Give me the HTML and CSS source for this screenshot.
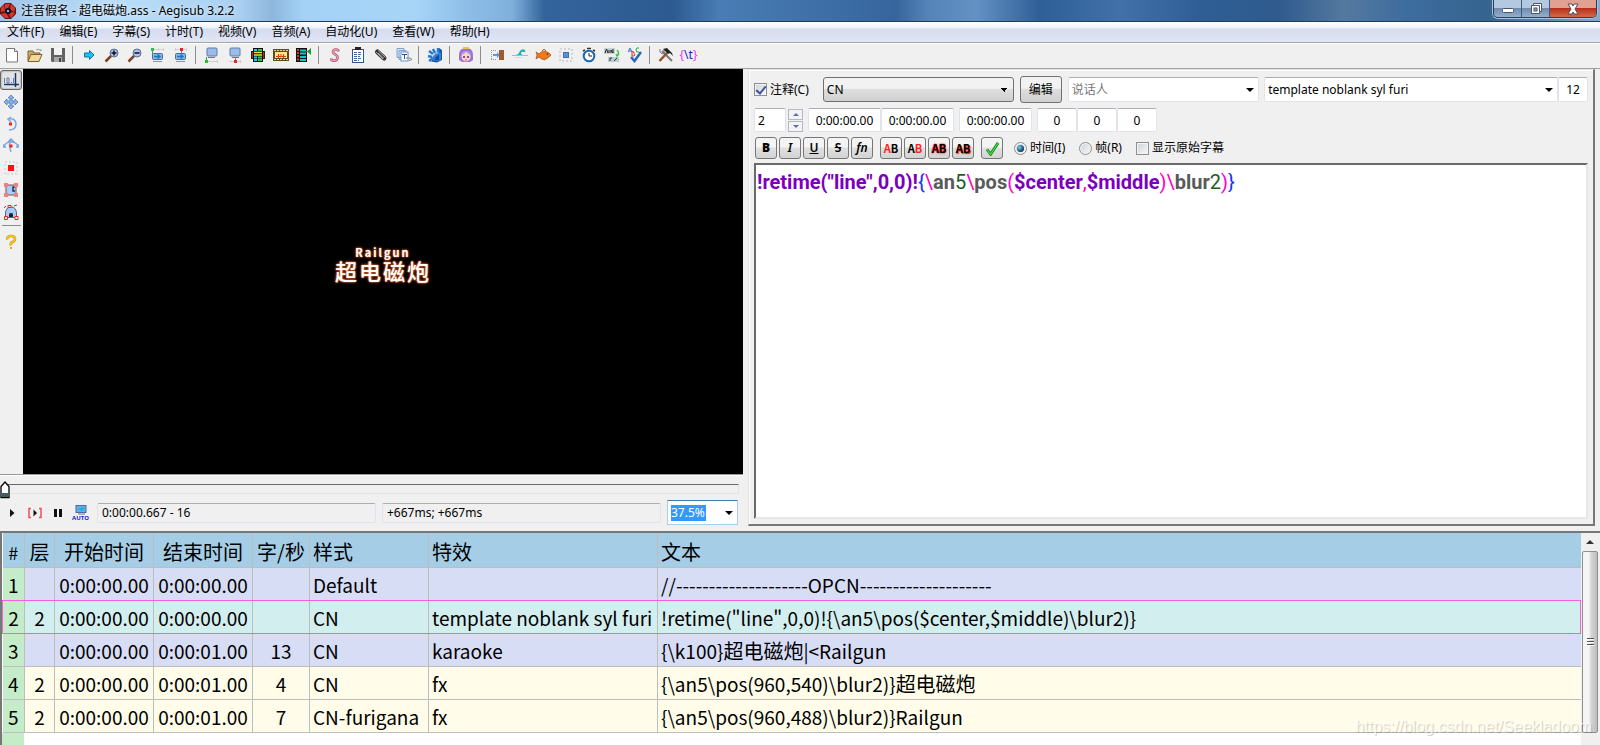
FILE: index.html
```html
<!DOCTYPE html>
<html lang="zh-CN">
<head>
<meta charset="utf-8">
<title>注音假名 - 超电磁炮.ass - Aegisub 3.2.2</title>
<link rel="stylesheet" href="styles.css">
</head>
<body>
<div class="app">
  <header class="titlebar">
    <svg class="logo" viewBox="0 0 16 16"><path d="M5 0h6l5 5v6l-5 5H5l-5-5V5z" fill="#6b1513"/><path d="M5 1h5L8 5 5 6zM11 1l4 4-1 4-4-3zM15 10l-4 5-2-4 3-2zM9 15H5l-4-4 5-1zM1 9V5l3-3 1 6z" fill="#d33a2c"/><circle cx="8" cy="8" r="3" fill="#0d1833"/><circle cx="8" cy="8" r="1" fill="#cfe0ff"/></svg>
    <h1 class="title">注音假名 - 超电磁炮.ass - Aegisub 3.2.2</h1>
    <div class="winbtns">
      <button class="winbtn" aria-label="最小化"><svg width="14" height="14" viewBox="0 0 14 14"><rect x="1.500" y="6.500" width="11" height="4" rx="1" fill="#fff" stroke="#4a5568"/></svg></button>
      <button class="winbtn" aria-label="还原"><svg width="14" height="14" viewBox="0 0 14 14"><path d="M4.500 1.500h8v8h-2v2h-8v-8h2z" fill="#fff" stroke="#4a5568"/><path d="M4.500 3.500h6v6" fill="none" stroke="#4a5568"/><rect x="5" y="6" width="3" height="3" fill="#8fa6c2" stroke="#4a5568"/></svg></button>
      <button class="winbtn winbtn-close" aria-label="关闭"><svg width="14" height="14" viewBox="0 0 14 14"><path d="M2 2h4l1 2 1-2h4L9 7l3 5H8L7 10l-1 2H2l3-5z" fill="#fff" stroke="#5a4a55"/></svg></button>
    </div>
  </header>
  <nav class="menubar">
    <button>文件(F)</button><button>编辑(E)</button><button>字幕(S)</button><button>计时(T)</button><button>视频(V)</button><button>音频(A)</button><button>自动化(U)</button><button>查看(W)</button><button>帮助(H)</button>
  </nav>
  <div class="toolbar" role="toolbar">
    <button aria-label="新建"><svg viewBox="0 0 16 16"><path d="M2.500 1.500h8l3 3v10.500h-11z" fill="#fff" stroke="#777"/><path d="M10.500 1.500v3h3" fill="#eee" stroke="#777"/></svg></button>
    <button aria-label="打开"><svg viewBox="0 0 16 16"><path d="M1 14V4h5l1 2h6v3" fill="#cda75c" stroke="#7a6236"/><path d="M1 14.500l3-7h11l-3 7z" fill="#f1d79a" stroke="#7a6236"/><path d="M9 3q3-2 5 1v-2" fill="none" stroke="#999"/></svg></button>
    <button aria-label="保存"><svg viewBox="0 0 16 16"><path d="M1 1h14v14H2l-1-1z" fill="#636363"/><rect x="4" y="1" width="8" height="7" fill="#f4f4f4"/><rect x="4" y="10" width="8" height="5" fill="#a8a8a8"/><rect x="9" y="11" width="2" height="4" fill="#444"/></svg></button>
    <span class="sep"></span>
    <button aria-label="跳转"><svg viewBox="0 0 16 16"><path d="M3.500 6h5V3.500L13 8l-4.500 4.500V10h-5z" fill="#12c6f5" stroke="#1671a5"/></svg></button>
    <button aria-label="放大"><svg viewBox="0 0 16 16"><path d="M1.500 14.500l6-6" stroke="#7a4526" stroke-width="2.500"/><circle cx="10" cy="6" r="4" fill="#a9c1ee" stroke="#5b6d93"/><path d="M7.500 6h5M10 3.500v5" stroke="#111" stroke-width="1.500"/></svg></button>
    <button aria-label="缩小"><svg viewBox="0 0 16 16"><path d="M1.500 14.500l6-6" stroke="#7a4526" stroke-width="2.500"/><circle cx="10" cy="6" r="4" fill="#a9c1ee" stroke="#5b6d93"/><path d="M7.500 6h5" stroke="#111" stroke-width="1.500"/></svg></button>
    <button aria-label="跳到起点"><svg viewBox="0 0 16 16"><path d="M4 2.500h10M13.500 1v3M8.500 1v3" stroke="#d2d2d2"/><rect x="1" y="1" width="3" height="3" fill="#27c63a"/><path d="M2.500 4v4" stroke="#6b84a8"/><rect x="2.500" y="6.500" width="10" height="6" rx="1" fill="#8db4e4" stroke="#4a6d9b"/><path d="M4 9.500h5M7.500 7.500l2.500 2-2.500 2" stroke="#0b7fc0" fill="none" stroke-width="1.500"/><path d="M3 14.500h9" stroke="#8b98a8"/></svg></button>
    <button aria-label="跳到终点"><svg viewBox="0 0 16 16"><path d="M2 2.500h12M2.500 1v3M13.500 1v3" stroke="#d2d2d2"/><rect x="7" y="1" width="3" height="3" fill="#e22"/><path d="M8.500 4v3" stroke="#6b84a8"/><rect x="2.500" y="6.500" width="10" height="6" rx="1" fill="#8db4e4" stroke="#4a6d9b"/><path d="M4 9.500h5M7.500 7.500l2.500 2-2.500 2" stroke="#0b7fc0" fill="none" stroke-width="1.500"/><path d="M3 14.500h9" stroke="#8b98a8"/></svg></button>
    <span class="sep"></span>
    <button aria-label="起点设为视频"><svg viewBox="0 0 16 16"><rect x="3" y="1" width="10" height="8" rx="1" fill="#9dbbe8" stroke="#5a7eb0"/><path d="M4 10.500h7M2.500 10v3" stroke="#777"/><path d="M4 14.500h10M13.500 13v3" stroke="#ccc"/><rect x="1" y="13" width="3" height="3" fill="#1fc62b"/></svg></button>
    <button aria-label="终点设为视频"><svg viewBox="0 0 16 16"><rect x="3" y="1" width="10" height="8" rx="1" fill="#9dbbe8" stroke="#5a7eb0"/><path d="M5 10.500h7M8.500 10v3" stroke="#777"/><path d="M2 14.500h12M13.500 13v3" stroke="#ccc"/><rect x="7" y="13" width="3" height="3" fill="#e22"/></svg></button>
    <button aria-label="选择可见行"><svg viewBox="0 0 16 16"><rect x="1.500" y="4.500" width="13" height="7" fill="#b22" stroke="#222"/><rect x="3" y="1" width="10" height="14" fill="#111"/><path d="M4 3h3M4 13h3M4 10.500h3" stroke="#15cde8" stroke-width="2"/><path d="M8 3h4M8 13h4M8 10.500h4" stroke="#22ca4c" stroke-width="2"/><path d="M4 5.500h8M4 8h8" stroke="#f2df3c" stroke-width="1.500"/></svg></button>
    <button aria-label="对齐场景"><svg viewBox="0 0 16 16"><rect x="0" y="2" width="16" height="12" fill="#5e4b1d"/><path d="M1 3.500h14M1 12.500h14" stroke="#eadb8a" stroke-dasharray="2 1"/><rect x="2" y="5" width="12" height="6" fill="#ffe680"/><path d="M3 9.500h10M5.500 7v4M8 7v3M10.500 7v4" stroke="#e23c16"/></svg></button>
    <button aria-label="平移"><svg viewBox="0 0 16 16"><rect x="0" y="1" width="11" height="14" fill="#111"/><path d="M1 3h2M1 6h2M1 9h2M1 12.500h2" stroke="#d33" stroke-width="2"/><path d="M4 3.500h6M4 6.500h6M4 10h6M4 13h6" stroke="#12c9c9" stroke-width="2"/><path d="M10 4.500h3" stroke="#f33"/><path d="M15 1v7l-4-3.500z" fill="#1c9c35"/></svg></button>
    <span class="sep"></span>
    <button aria-label="样式管理器"><svg viewBox="0 0 16 16"><path d="M11.500 4.500C11 1.500 6 2 6 5c0 3 5 2 4.500 6C10 14.500 4.500 14.500 4 11.500" fill="none" stroke="#b0506c" stroke-width="2.600"/><path d="M11.500 4.500C11 1.500 6 2 6 5c0 3 5 2 4.500 6C10 14.500 4.500 14.500 4 11.500" fill="none" stroke="#f59ab2" stroke-width="1.300"/></svg></button>
    <button aria-label="属性"><svg viewBox="0 0 16 16"><rect x="2.500" y="2.500" width="11" height="13" fill="#fff" stroke="#355486"/><rect x="5" y="0" width="6" height="3" fill="#222"/><path d="M4 5.500h7M4 7.500h8M4 9.500h6M4 11.500h8M4 13.500h5" stroke="#3d68a8" stroke-dasharray="3 1"/></svg></button>
    <button aria-label="附件"><svg viewBox="0 0 16 16"><path d="M4.500 5l6.500 6" stroke="#333" stroke-width="5" stroke-linecap="round"/><path d="M3 5l7 7M5 3.500l7.500 7M5 6l6 5.500" stroke="#aaa" stroke-width="1"/></svg></button>
    <button aria-label="字体收集"><svg viewBox="0 0 16 16"><path d="M1 1.500h7v9H1zM3 3.500h7v9H3z" fill="#d8e6f8" stroke="#7fa2cf"/><rect x="5" y="5" width="7" height="9" fill="#fff" stroke="#6b93c8"/><path d="M6 7.500h5M8.500 7v5" stroke="#274d92"/><path d="M10 11h4l2 1.500-3 1" stroke="#888" fill="none"/></svg></button>
    <span class="sep"></span>
    <button aria-label="自动化"><svg viewBox="0 0 16 16"><path d="M12 1l3 2v10l-5 2.500-6-1 3-4z" fill="#1c56a6"/><path d="M2 4l4 3M6 2l2 4M11 1v4M1 9l4 1M2 14l4-3" stroke="#2878d0" stroke-width="2.500"/><path d="M5 13q0-7 7-8l2 1v7l-3 1" fill="#2e7fd6"/><path d="M8 13q0-4 4-5v5z" fill="#174a91"/><path d="M5.500 10q2-4 6-4.500" stroke="#8cc6f4" fill="none"/></svg></button>
    <span class="sep"></span>
    <button aria-label="ASSDraw"><svg viewBox="0 0 16 16"><path d="M1 8q0-7 7-7t7 7v5l-3 2H4l-3-2z" fill="#9d74d6"/><ellipse cx="8" cy="9.500" rx="4.500" ry="5" fill="#fbd5cb"/><path d="M3 8q1-4 5-4t5 4q-3-1-5-3-2 3-5 3z" fill="#b99be4"/><path d="M6 9v2M10 9v2" stroke="#542c82" stroke-width="1.500"/><path d="M5 1h6" stroke="#f0c33f" stroke-width="2"/><path d="M7 13h2" stroke="#d55"/></svg></button>
    <span class="sep"></span>
    <button aria-label="平移时间"><svg viewBox="0 0 16 16"><path d="M2.500 3v10M2 3.500h6M2 12.500h6" stroke="#999" stroke-dasharray="1 1"/><path d="M4 8h5" stroke="#5b9ae0" stroke-width="2"/><path d="M8 5l3 3-3 3z" fill="#5b9ae0"/><rect x="10" y="3" width="5" height="10" fill="#9b5a32"/></svg></button>
    <button aria-label="样式助手"><svg viewBox="0 0 16 16"><path d="M4 8q3-1 4-4 2-3 5-1 1 2-1 2-2-1-3 1 0 2 3 2z" fill="#1fb3b8"/><path d="M0 8.500h16" stroke="#87c2ea"/><path d="M3 10.500h7" stroke="#c4e2f4"/></svg></button>
    <button aria-label="翻译助手"><svg viewBox="0 0 16 16"><path d="M1 5l3 2q4-5 10-1l2 2-2 2q-5 5-10 0l-3 2 1-4z" fill="#ee791f" stroke="#a84b10" stroke-width=".7"/><path d="M7 4l2-2 2 2M8 12l2 1" stroke="#c25a12" fill="none"/><circle cx="12.500" cy="7" r=".8" fill="#222"/></svg></button>
    <button aria-label="重设分辨率"><svg viewBox="0 0 16 16"><rect x="2" y="2" width="12" height="12" fill="none" stroke="#d4d4d4" stroke-width="2" stroke-dasharray="2 2"/><rect x="5.500" y="5.500" width="5" height="5" fill="#5b8fd8" stroke="#4572af"/></svg></button>
    <button aria-label="后期处理"><svg viewBox="0 0 16 16"><path d="M6 1.500h4M2 4l2-1M14 4l-2-1" stroke="#333" stroke-width="1.500"/><circle cx="8" cy="9" r="5.300" fill="#fff" stroke="#1d62bd" stroke-width="2"/><path d="M8 9V6M8 9h3" stroke="#222"/></svg></button>
    <button aria-label="汉字计时"><svg viewBox="0 0 16 16"><rect x="0" y="1" width="11" height="6" fill="#c4d4d4"/><path d="M1 6l1.500-4L4 6M5 3v3M7 6V3l2 3V2" stroke="#222" fill="none"/><rect x="4" y="10" width="11" height="5" fill="#b7ced4"/><path d="M6 14v-3h2M10 14l3-3" stroke="#333" fill="none"/><path d="M13 3q3 3 0 6M15 7l-2 2-1-2" stroke="#3c3" fill="none" stroke-width="1.500"/></svg></button>
    <button aria-label="拼写检查"><svg viewBox="0 0 16 16"><path d="M1 5l2-4 2 4M2 4h2" stroke="#3a79d0" fill="none"/><path d="M5 4v5h2q2-1 0-2.500 1-2-2-2" stroke="#d33" fill="none"/><path d="M12 1q-3-1-3 2t3 2" stroke="#3a3" fill="none"/><path d="M4 10l3.500 4L14 5" stroke="#2865bd" fill="none" stroke-width="2.500"/></svg></button>
    <span class="sep"></span>
    <button aria-label="选项"><svg viewBox="0 0 16 16"><path d="M4 4l10 10" stroke="#777" stroke-width="2"/><path d="M2 2v3l2 2 2-1V3" stroke="#777" fill="none"/><path d="M1.500 14L9 6" stroke="#96502a" stroke-width="2.500"/><path d="M5 2l4-1 5 5 1 3-3-3-2 1-3-3z" fill="#222"/></svg></button>
    <button class="tagbtn" aria-label="切换标签显示"><span class="mag">{</span>\t<span class="mag">}</span></button>
  </div>

  <main class="work">
    <section class="videopane">
      <div class="stage">
        <div class="vtools" role="toolbar">
          <button class="on" aria-label="标准"><svg viewBox="0 0 16 16"><path d="M1.500 6v5M4 6h2v5H4zM8 10.500h1M10.500 6v5" fill="none" stroke="#5c6ea8" stroke-width=".9"/><path d="M12.500 1v14M1 12.500h15" stroke="#16386e" stroke-width="1.500"/></svg></button>
          <button aria-label="拖动"><svg viewBox="0 0 16 16"><path d="M8 1l3 3H9v3h3V5l3 3-3 3V9H9v3h2l-3 3-3-3h2V9H4v2L1 8l3-3v2h3V4H5z" fill="#8db5ee" stroke="#4b78b8" stroke-width=".8"/></svg></button>
          <button aria-label="Z 轴旋转"><svg viewBox="0 0 16 16"><path d="M5 3q8-1 8 5t-7 6M8 1L5 3l3 3" fill="none" stroke="#7da6e0" stroke-width="1.500"/><rect x="6" y="6.500" width="3" height="3" fill="#e22"/></svg></button>
          <button aria-label="XY 轴旋转"><svg viewBox="0 0 16 16"><path d="M1 9q1-5 7-5t7 5M13 9h3V6M8 1q-3 5 0 13M5 4l3-3 3 3M0 6v3h3" fill="none" stroke="#7da6e0" stroke-width="1.500"/><rect x="6.500" y="6.500" width="3" height="3" fill="#e22"/></svg></button>
          <button aria-label="缩放"><svg viewBox="0 0 16 16"><rect x="2" y="2" width="12" height="12" fill="none" stroke="#ddd" stroke-width="2" stroke-dasharray="2 2"/><rect x="5" y="5" width="6" height="6" fill="#f11"/></svg></button>
          <button aria-label="矩形裁剪"><svg viewBox="0 0 16 16"><rect x="3" y="3" width="10" height="10" fill="#a9cbfa" stroke="#8a5148"/><path d="M12 5h-2v4h2" stroke="#234" stroke-width="1.500" fill="none"/><path d="M1 1h4v4H1zM11 1h4v4h-4zM1 11h4v4H1zM11 11h4v4h-4z" fill="#f07f7f"/></svg></button>
          <button aria-label="矢量裁剪"><svg viewBox="0 0 16 16"><path d="M2.500 13.500V9Q3 3 8 3t5.500 6v4.500z" fill="#a9cbfa" stroke="#567"/><path d="M7 13v-3h2v3M6 12h4" stroke="#111" fill="none" stroke-width="1.500"/><path d="M1.500 12.500h3v3h-3zM12 12.500h3v3h-3zM5 1.500h3v2H5z" fill="#fff" stroke="#e22"/><path d="M1 4l2-2M11 2l3-1" stroke="#e22"/></svg></button>
          <span class="hsep"></span>
          <button aria-label="帮助"><svg viewBox="0 0 16 16"><path d="M4 5.500Q4 2 8 2t4 3q0 2-2.500 3T8 11.500" fill="none" stroke="#c89a18" stroke-width="2.500"/><path d="M4 5.500Q4 2 8 2t4 3q0 2-2.500 3T8 11.500" fill="none" stroke="#f8c51e" stroke-width="1.500"/><rect x="7" y="13" width="2" height="2" fill="#e0a810"/></svg></button>
        </div>
        <div class="video">
          <div class="sub"><span class="furi">Railgun</span><span class="kanji">超电磁炮</span></div>
        </div>
      </div>
      <div class="seek">
        <div class="track"></div>
        <svg class="thumb" width="10" height="18" viewBox="0 0 10 18"><path d="M1 16.500V5.500L5 1l4 4.500v11z" fill="#fff" stroke="#000" stroke-width="1.300"/><rect x="2" y="12" width="6" height="4" fill="#356464"/></svg>
        <input type="range" aria-label="视频位置" value="0">
      </div>
      <div class="playbar">
        <button aria-label="播放"><svg viewBox="0 0 16 16"><path d="M6 4l4.500 4L6 12z" fill="#111"/></svg></button>
        <button aria-label="播放当前行"><svg viewBox="0 0 16 16"><path d="M4 3.500H2v9h2M12 3.500h2v9h-2" fill="none" stroke="#f25050" stroke-width="1.500"/><path d="M6.500 4.500L10 8l-3.500 3.500z" fill="#111"/></svg></button>
        <button aria-label="暂停"><svg viewBox="0 0 16 16"><path d="M5.500 4v8M10.500 4v8" stroke="#111" stroke-width="3"/></svg></button>
        <button class="auto" aria-label="自动跳转"><svg viewBox="0 0 16 10"><rect x="3" y=".5" width="10" height="7" fill="#78a5dc" stroke="#4a6d9b"/><path d="M5 4h5M8 2l2.500 2L8 6" stroke="#0be" fill="none" stroke-width="1.500"/><path d="M5 9h7" stroke="#777"/></svg><span>AUTO</span></button>
        <input class="status" aria-label="当前时间" readonly value="0:00:00.667 - 16">
        <input class="status" aria-label="相对时间" readonly value="+667ms; +667ms">
        <div class="zoom"><span class="hl">37.5%</span><button class="drop" aria-label="缩放列表"></button></div>
      </div>
    </section>

    <section class="editpane">
      <div class="row row-a">
        <label class="check"><input type="checkbox" checked>注释(C)</label>
        <select class="style" aria-label="样式"><option>CN</option></select>
        <button class="editbtn">编辑</button>
        <div class="combo actor"><input aria-label="说话人" placeholder="说话人"><button class="drop" aria-label="说话人列表"></button></div>
        <div class="combo effect"><input aria-label="特效" value="template noblank syl furi"><button class="drop" aria-label="特效列表"></button></div>
        <input class="box count" aria-label="字符数" value="12">
      </div>
      <div class="row row-b">
        <input class="box layer" aria-label="层" value="2">
        <div class="spin"><button class="up" aria-label="增加"></button><button class="down" aria-label="减少"></button></div>
        <input class="box time" aria-label="开始时间" value="0:00:00.00">
        <input class="box time" aria-label="结束时间" value="0:00:00.00">
        <input class="box time dur" aria-label="持续时间" value="0:00:00.00">
        <input class="box margin" aria-label="左边距" value="0">
        <input class="box margin" aria-label="右边距" value="0">
        <input class="box margin" aria-label="垂直边距" value="0">
      </div>
      <div class="row row-c">
        <button class="fmt"><b>B</b></button><button class="fmt"><i>I</i></button><button class="fmt"><u>U</u></button><button class="fmt"><s>S</s></button><button class="fmt"><i>fn</i></button>
        <button class="fmt ab gapped"><span class="red">A</span>B</button><button class="fmt ab">A<span class="red">B</span></button><button class="fmt ab outl">AB</button><button class="fmt ab shad">AB</button>
        <button class="fmt gapped" aria-label="提交"><svg viewBox="0 0 16 16"><path d="M2 9l4 5L14 2" fill="none" stroke="#197a1c" stroke-width="3"/><path d="M2 9l4 5L14 2" fill="none" stroke="#3edb3c" stroke-width="1.500"/></svg></button>
        <label class="check r1"><input type="radio" name="unit" checked>时间(I)</label>
        <label class="check r2"><input type="radio" name="unit">帧(R)</label>
        <label class="check r2"><input type="checkbox">显示原始字幕</label>
      </div>
      <div class="editor" role="textbox" contenteditable="true" spellcheck="false"><b class="var">!retime("line",0,0)!</b><span class="brace">{</span><span class="pun">\</span><b class="tag">an</b><span class="num">5</span><span class="pun">\</span><b class="tag">pos</b><span class="pun">(</span><b class="var">$center</b><span class="pun">,</span><b class="var">$middle</b><span class="pun">)\</span><b class="tag">blur</b><span class="num">2</span><span class="pun">)</span><span class="brace">}</span></div>
    </section>
  </main>

  <section class="gridpane">
    <div class="gridbody">
      <table class="grid">
        <colgroup><col class="c-no"><col class="c-layer"><col class="c-time"><col class="c-time"><col class="c-cps"><col class="c-style"><col class="c-fx"><col></colgroup>
        <thead><tr><th class="hash">#</th><th>层</th><th>开始时间</th><th>结束时间</th><th>字/秒</th><th class="l">样式</th><th class="l">特效</th><th class="l">文本</th></tr></thead>
        <tbody>
          <tr class="note"><td>1</td><td></td><td>0:00:00.00</td><td>0:00:00.00</td><td></td><td class="l">Default</td><td class="l"></td><td class="l">//--------------------OPCN--------------------</td></tr>
          <tr class="active"><td>2</td><td>2</td><td>0:00:00.00</td><td>0:00:00.00</td><td></td><td class="l">CN</td><td class="l">template noblank syl furi</td><td class="l">!retime("line",0,0)!{\an5\pos($center,$middle)\blur2)}</td></tr>
          <tr class="note"><td>3</td><td></td><td>0:00:00.00</td><td>0:00:01.00</td><td>13</td><td class="l">CN</td><td class="l">karaoke</td><td class="l">{\k100}<span class="han">超电磁炮</span>|&lt;Railgun</td></tr>
          <tr><td>4</td><td>2</td><td>0:00:00.00</td><td>0:00:01.00</td><td>4</td><td class="l">CN</td><td class="l">fx</td><td class="l">{\an5\pos(960,540)\blur2)}<span class="han">超电磁炮</span></td></tr>
          <tr><td>5</td><td>2</td><td>0:00:00.00</td><td>0:00:01.00</td><td>7</td><td class="l">CN-furigana</td><td class="l">fx</td><td class="l">{\an5\pos(960,488)\blur2)}Railgun</td></tr>
        </tbody>
      </table>
      <div class="gutter"></div>
    </div>
    <div class="scroll"><button class="sup" aria-label="向上滚动"></button><div class="sthumb"><i></i><i></i><i></i></div></div>
    <div class="watermark">https://blog.csdn.net/Seekladoom</div>
  </section>
</div>
</body>
</html>
```
FILE: styles.css
```css
* { box-sizing: border-box; }
body { margin: 0; background: #f0f0f0; color: #000; font: 12px/16px "Noto Sans", "Noto Sans CJK SC", sans-serif; }
button, input, select { font: inherit; color: inherit; margin: 0; padding: 0; border: 0; background: none; min-width: 0; }
svg { display: block; }
.app { display: flex; flex-direction: column; min-height: 100vh; overflow: hidden; }

.titlebar { display: flex; align-items: center; height: 22px; padding: 0 3px 0 0; border-bottom: 1px solid #243a5a;
  background: linear-gradient(90deg, #9fc4e8 0, #b9def8 7%, #a9d0f0 15%, #8fb6dc 17%, #a3d2f6 19%, #a6d5f8 26%, #8fbfe8 29%, #7fb0dc 32%, #33649b 34%, #2c5a91 42%, #4a7db5 45%, #35659c 56%, #5484b8 58%, #6391c4 61%, #2f5f97 65%, #4171a8 70%, #2e5e95 75%, #2f5b8e 80%, #54799f 84%, #3d6c9f 88%, #35648f 93%, #8ba9cb 100%); }
.logo { width: 16px; height: 16px; }
.title { flex: 1; margin: 0 0 0 5px; font-size: 12px; font-weight: 400; text-shadow: 0 0 5px #fff; }
.winbtns { display: flex; align-self: flex-start; height: 18px; border: 1px solid #2c3f5c; border-top: 0; border-radius: 0 0 5px 5px; overflow: hidden; box-shadow: 0 0 0 1px #a9c2dd; }
.winbtn { width: 28px; display: grid; place-items: center; border-right: 1px solid #44597a; background: linear-gradient(#b4c8df 0 45%, #6f8cae 50%, #94b0cd); }
.winbtn-close { width: 46px; border: 0; background: linear-gradient(#e0a192 0 45%, #b8301a 50%, #d5694a); }

.menubar { display: flex; gap: 15px; height: 20px; padding-left: 7px; background: linear-gradient(#fff, #eef1f9 30%, #d5dcee 35%, #e2e6f6); }
.toolbar { display: flex; align-items: center; height: 27px; padding-bottom: 2px; border-top: 1px solid #a5a5a5; border-bottom: 1px solid #a0a0a0; box-shadow: inset 0 1px #fff; }
.toolbar button { width: 23px; height: 23px; display: grid; place-items: center; }
.toolbar svg { width: 16px; height: 16px; }
.toolbar .tagbtn { display: flex; align-items: center; justify-content: center; color: #22c; }
.mag { color: #f3d; }
.sep { width: 8px; height: 18px; background: linear-gradient(90deg, transparent 3px, #8d8d8d 3px 4px, transparent 4px); }

.work { display: grid; grid-template-columns: 743fr 847fr; gap: 5px; padding-right: 5px; }
.videopane { display: flex; flex-direction: column; }
.stage { display: flex; border-bottom: 1px solid #999; }
.vtools { width: 23px; display: flex; flex-direction: column; flex: none; padding-top: 1px; }
.vtools button { width: 22px; height: 22px; display: grid; place-items: center; }
.vtools svg { width: 16px; height: 16px; }
.vtools .on { height: 20px; margin-bottom: 1px; border: 1px solid #666; border-radius: 3px; background: #e3e3e3; box-shadow: inset 0 0 2px #777; }
.hsep { height: 1px; margin: 2px 2px 5px; background: #8d8d8d; }
.video { flex: 1; aspect-ratio: 16 / 9; background: #000; display: grid; place-items: center; }
.sub { display: flex; flex-direction: column; align-items: center; margin-top: -18px; color: #fff; font-family: "Noto Sans CJK SC", sans-serif; font-weight: 700; text-shadow: 0 0 1px #e0622c, 0 0 2px #e0622c, 0 0 3px #c94f1c; }
.furi { font-size: 11px; line-height: 14px; letter-spacing: 2px; }
.kanji { font-size: 22px; line-height: 22px; letter-spacing: 2px; font-weight: 500; }

.seek { position: relative; height: 24px; padding: 8px 4px 0 6px; border-top: 1px solid #fff; }
.track { height: 10px; border: 1px solid #e3e3e3; border-top-color: #696969; }
.thumb { position: absolute; left: 0; top: 5px; }
.seek input { position: absolute; inset: 0; width: 100%; opacity: 0; }
.playbar { display: flex; align-items: center; padding: 1px 5px 6px 0; }
.playbar > button { width: 23px; height: 23px; display: grid; place-items: center; align-content: center; }
.playbar svg { width: 16px; }
.auto span { font-size: 6px; line-height: 6px; font-weight: 700; color: #22d; }
.status { flex: 1; height: 20px; padding: 0 4px; border: 1px solid #e0e3ea; border-top-color: #abadb3; border-radius: 2px; }
.auto + .status { margin-left: 5px; }
.status + .status { margin: 0 6px; }
.zoom { display: flex; align-items: center; justify-content: space-between; width: 71px; height: 25px; padding-left: 3px; border: 1px solid #a9cfe6; border-top-color: #3d7bad; background: #fff; }
.hl { background: #3399ff; color: #fff; padding-right: 1px; }
.drop { width: 16px; height: 16px; flex: none; }
.drop::before { content: ""; display: block; margin: auto; width: 0; border: 4px solid transparent; border-top-color: #000; border-bottom: 0; }

.editpane { display: flex; flex-direction: column; margin-bottom: 5px; padding: 6px 5px 5px; border: 1px solid #e3e3e3; border-right: 2px solid #777; border-bottom: 2px solid #777; box-shadow: inset 1px 1px #fff; }
.row { display: flex; align-items: center; }
.row-a { height: 27px; }
.row-b { height: 24px; margin-top: 5px; }
.row-c { height: 22px; margin: 5px 0 4px 1px; }
.check { display: flex; align-items: center; gap: 3px; white-space: nowrap; }
.check input { appearance: none; width: 13px; height: 13px; border: 1px solid #8e8f8f; background: linear-gradient(135deg, #cfd3d8, #f6f6f6); box-shadow: inset 0 0 0 1px #f4f4f4; flex: none; display: grid; place-items: center; }
.check input[type=radio] { border-radius: 50%; }
.check input[type=checkbox]:checked::before { content: ""; width: 4px; height: 8px; margin-top: -2px; border: solid #3f57a0; border-width: 0 2px 2px 0; transform: rotate(40deg); }
.check input[type=radio]:checked::before { content: ""; width: 7px; height: 7px; border-radius: 50%; background: radial-gradient(circle at 35% 35%, #6cd0f0, #0b3a5c 70%); }
.style { appearance: none; flex: 0 1 191px; height: 25px; margin-left: 14px; padding: 0 3px; border: 1px solid #707070; border-radius: 3px; background: conic-gradient(from 315deg at 50% 100%, #000 90deg, transparent 0) right 5px center / 8px 4px no-repeat, linear-gradient(#f2f2f2 0 45%, #dedede 50%, #d0d0d0); }
.editbtn { width: 42px; height: 27px; margin: 0 6px; border: 1px solid #707070; border-radius: 3px; background: linear-gradient(#f2f2f2 0 45%, #dedede 50%, #d0d0d0); }
.combo, .box { height: 25px; background: #fff; border: 1px solid #e2e3ea; border-top-color: #abadb3; border-radius: 2px; }
.combo { display: flex; align-items: center; padding: 0 0 0 3px; }
.combo input { flex: 1; width: 0; outline: 0; }
.combo input::placeholder { color: #777; opacity: 1; }
.actor { flex: 191; margin-right: 5px; }
.effect { flex: 296; }
.box { text-align: center; }
.count { width: 30px; }
.layer { width: 32px; padding-left: 3px; text-align: left; }
.row-b .box { height: 24px; }
.spin { display: grid; gap: 1px; width: 15px; height: 23px; margin: 0 5px 0 2px; }
.spin button { border: 1px solid #b5b8c0; background: #f3f3f5; }
.spin button::before { content: ""; display: block; width: 0; margin: auto; border: 3px solid transparent; border-bottom-color: #5a70ad; border-top: 0; }
.spin .down::before { border-top: 3px solid #5a70ad; border-bottom: 0; }
.time { width: 73px; }
.dur { margin: 0 5px; }
.margin { width: 40px; }
.fmt { width: 22px; height: 22px; margin-right: 2px; border: 1px solid #777; border-radius: 3px; background: linear-gradient(#f4f4f4 0 45%, #e0e0e0 50%, #d3d3d3); display: flex; align-items: center; justify-content: center; font-weight: 600; }
.fmt svg { width: 15px; height: 15px; }
.gapped { margin-left: 5px; }
.ab { font-size: 11px; font-weight: 700; font-family: "Noto Sans CJK SC", sans-serif; }
.red { color: #f22; }
.outl { text-shadow: 0 0 1px #f00, 0 0 2px #f00; }
.shad { text-shadow: 1px 1px 1px #f00; }
.r1 { margin-left: 9px; }
.r2 { margin-left: 14px; }
.editor { flex: 1; padding: 3px 1px; background: #fff; border: 2px solid #6a6a6a; border-right: 2px solid #e6e6e6; border-bottom-color: #e6e6e6; font: 20px/28px Roboto, "Noto Sans CJK SC", sans-serif; outline: 0; }
.var { color: #7b00bd; }
.tag { color: #5a5a5a; }
.num { color: #1f5c1f; }
.pun { color: #ff00c8; }
.brace { color: #1432ff; }

.gridpane { position: relative; flex: 1; display: flex; border-top: 2px solid #777; border-left: 2px solid #777; padding-right: 2px; background: #f0f0f0; }
.gridbody { flex: 1; display: flex; flex-direction: column; background: #fff; margin-right: 1px; }
.grid { width: 100%; table-layout: fixed; border-collapse: collapse; font: 19px/24px "Noto Sans CJK SC", sans-serif; }
.grid th, .grid td { height: 33px; padding: 4px 0 2px; border: 1px solid #bdbdbd; text-align: center; white-space: nowrap; }
.grid th { height: 34px; padding: 7px 0 2px; background: #a5cee6; font-size: 20px; font-weight: 400; border-top: 0; }
.grid tr > :first-child { border-left: 0; }
.grid tr > :last-child { border-right: 0; }
.grid th.hash { font-size: 18px; }
.grid .l { text-align: left; padding-left: 3px; }
.grid td { background: #fffde9; }
.grid .note td { background: #d8ddf6; }
.grid .active td { background: #d2eeee; border-top-color: #fb5be6; border-bottom-color: #fb5be6; }
.grid tbody tr td:first-child { background: #c4ecc8; }
.grid .active td:first-child { border-left: 1px solid #fb5be6; }
.grid .active td:last-child { border-right: 1px solid #fb5be6; }
.grid tbody .note td { border-bottom-color: #bdbdbd; }
.grid tbody .note:first-child td { border-bottom-color: #fb5be6; }
.grid tbody .note:nth-child(3) td { border-top-color: #fb5be6; }
.han { font-size: 20px; line-height: 20px; }
.c-no { width: 22px; } .c-layer { width: 30px; } .c-time { width: 99px; } .c-cps { width: 57px; } .c-style { width: 119px; } .c-fx { width: 229px; }
.gutter { flex: 1; width: 22px; background: #c4ecc8; }
.scroll { width: 16px; display: flex; flex-direction: column; background: #f0f0f0; }
.sup { height: 18px; }
.sup::before { content: ""; display: block; width: 0; margin: auto; border: 4px solid transparent; border-bottom-color: #333; border-top: 0; }
.sthumb { flex: 1; margin-bottom: 12px; border: 1px solid #8f8f8f; border-radius: 2px; background: linear-gradient(90deg, #f5f5f5 0 40%, #d4d4d4 60%, #bcbcbc); display: flex; flex-direction: column; align-items: center; justify-content: center; gap: 1px; }
.sthumb i { width: 7px; height: 2px; background: #555; border-bottom: 1px solid #fff; }
.watermark { position: absolute; right: 8px; bottom: 9px; font: 16px/18px "Liberation Sans", sans-serif; color: rgba(255, 255, 255, .8); text-shadow: 1px 1px 1px rgba(0, 0, 0, .2); }
```
